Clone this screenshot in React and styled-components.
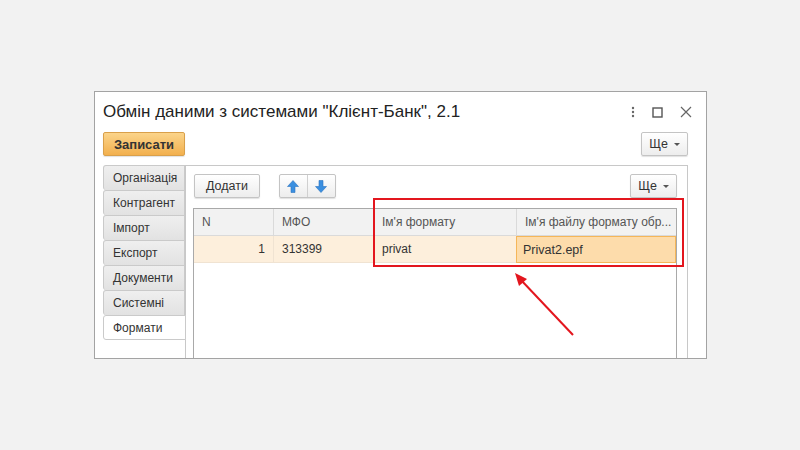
import React from 'react'
import styled, {createGlobalStyle} from 'styled-components'

const Global = createGlobalStyle`
  html, body {
    margin: 0;
    padding: 0;
    background: #f2f2f2;
    font-family: Arial, "Liberation Sans", sans-serif;
  }
`

const Page = styled.div`
  width: 800px;
  height: 450px;
  overflow: hidden;
  padding-top: 91px;
  padding-left: 94px;
  box-sizing: border-box;
`

const Window = styled.div`
  position: relative;
  width: 613px;
  height: 268px;
  background: #fff;
  border: 1px solid #a3a3a3;
  box-sizing: border-box;
  overflow: hidden;
  padding: 0 18px 0 8px;
  display: flex;
  flex-direction: column;
`

const TitleBar = styled.div`
  display: flex;
  align-items: center;
  height: 38px;
  padding-top: 2px;
  box-sizing: border-box;
`

const Title = styled.div`
  flex: 1;
  font-size: 17px;
  color: #222;
  white-space: nowrap;
`

const TitleIcons = styled.div`
  display: flex;
  align-items: center;
  gap: 17px;
  margin-right: -4px;
  color: #555;
`

const Toolbar = styled.div`
  display: flex;
  justify-content: space-between;
  align-items: center;
  margin-top: 2px;
  height: 24px;
`

const Button = styled.button`
  font-family: Arial, "Liberation Sans", sans-serif;
  font-size: 12.5px;
  color: #333;
  height: 24px;
  padding: 0 ${p => p.$px || 10}px;
  border: 1px solid #c4c4c4;
  border-radius: 2px;
  background: linear-gradient(#ffffff, #ededed);
  box-shadow: 0 1px 1px rgba(0,0,0,0.12);
  display: inline-flex;
  align-items: center;
  gap: 6px;
  cursor: pointer;
  box-sizing: border-box;
`

const SaveButton = styled(Button)`
  width: 82px;
  justify-content: center;
  font-weight: bold;
  font-size: 13px;
  border-color: #d9a04a;
  background: linear-gradient(#fbd48a, #f2b04e);
  color: #333;
`

const Caret = styled.span`
  width: 0;
  height: 0;
  border-left: 3px solid transparent;
  border-right: 3px solid transparent;
  border-top: 3px solid #555;
`

const TabPanel = styled.div`
  margin-top: 9px;
  display: flex;
  flex: 1;
`

const TabColumn = styled.div`
  width: 82px;
  display: flex;
  flex-direction: column;
  border-right: 1px solid #c8c8c8;
  margin-right: -1px;
`

const Tab = styled.div`
  height: 25px;
  box-sizing: border-box;
  padding-left: 9px;
  display: flex;
  align-items: center;
  font-size: 12px;
  color: #333;
  border: 1px solid #cacaca;
  border-bottom: none;
  border-radius: 3px 0 0 3px;
  background: ${p => p.$active ? '#fff' : 'linear-gradient(#efefef, #e2e2e2)'};
  margin-right: ${p => p.$active ? '-1px' : '0'};
  position: relative;
  &:last-child {
    border-bottom: 1px solid #cacaca;
  }
`

const Content = styled.div`
  flex: 1;
  border-top: 1px solid #c8c8c8;
  border-right: 1px solid #c8c8c8;
  padding: 8px 10px 0 9px;
  display: flex;
  flex-direction: column;
`

const ContentBar = styled.div`
  display: flex;
  align-items: center;
  height: 24px;
`

const Group = styled.div`
  display: flex;
  margin-left: 19px;
  border: 1px solid #c4c4c4;
  border-radius: 2px;
  background: linear-gradient(#ffffff, #ededed);
  box-shadow: 0 1px 1px rgba(0,0,0,0.12);
  height: 24px;
  box-sizing: border-box;
`

const GroupCell = styled.div`
  width: 27px;
  display: flex;
  align-items: center;
  justify-content: center;
  & + & {
    border-left: 1px solid #d0d0d0;
  }
`

const Spacer = styled.div`
  flex: 1;
`

const Table = styled.div`
  margin-top: 10px;
  margin-left: -1px;
  flex: 1;
  border: 1px solid #a9a9a9;
  border-bottom: none;
  display: flex;
  flex-direction: column;
`

const Row = styled.div`
  display: grid;
  grid-template-columns: 79px 100px 143px 1fr;
  height: 26px;
  background: ${p => p.$head ? '#f2f2f2' : '#fdefdc'};
  border-bottom: 1px solid ${p => p.$head ? '#dadada' : '#f0e3d2'};
`

const Cell = styled.div`
  display: flex;
  align-items: center;
  justify-content: ${p => p.$right ? 'flex-end' : 'flex-start'};
  padding: 0 8px;
  font-size: 12px;
  color: ${p => p.$head ? '#555' : '#333'};
  white-space: nowrap;
  overflow: hidden;
  box-sizing: border-box;
  border-left: ${p => p.$first ? 'none' : `1px solid ${p.$head ? '#dadada' : '#f0e3d2'}`};
  ${p => p.$selected && `
    background: #fddcab;
    border: 1px solid #f5b659;
    margin: 0 0 -1px 0;
    padding-left: 6px;
    font-size: 12.5px;
  `}
`

const Highlight = styled.div`
  position: absolute;
  left: 278px;
  top: 106px;
  width: 311px;
  height: 69px;
  border: 2px solid #e3161e;
  box-sizing: border-box;
`

const Arrow = styled.svg`
  position: absolute;
  left: 410px;
  top: 177px;
`

function UpArrow({down}) {
  return (
    <svg width="12" height="13" viewBox="0 0 12 13" style={down ? {transform: 'rotate(180deg)'} : undefined}>
      <path d="M6 0.5 L11.5 6.5 L8 6.5 L8 12.5 L4 12.5 L4 6.5 L0.5 6.5 Z" fill="#3a8fe0" stroke="#2e74c0" strokeWidth="0.6" />
    </svg>
  )
}

export default function App() {
  const tabs = ['Організація', 'Контрагент', 'Імпорт', 'Експорт', 'Документи', 'Системні', 'Формати']
  return (
    <Page>
      <Global />
      <Window>
        <TitleBar>
          <Title>Обмін даними з системами "Клієнт-Банк", 2.1</Title>
          <TitleIcons>
            <svg width="4" height="12" viewBox="0 0 4 12">
              <circle cx="2" cy="2" r="1.2" fill="#666" />
              <circle cx="2" cy="6" r="1.2" fill="#666" />
              <circle cx="2" cy="10" r="1.2" fill="#666" />
            </svg>
            <svg width="11" height="11" viewBox="0 0 11 11">
              <rect x="1" y="1" width="9" height="9" fill="none" stroke="#555" strokeWidth="1.4" />
            </svg>
            <svg width="12" height="12" viewBox="0 0 12 12">
              <path d="M1 1 L11 11 M11 1 L1 11" stroke="#666" strokeWidth="1.2" />
            </svg>
          </TitleIcons>
        </TitleBar>
        <Toolbar>
          <SaveButton>Записати</SaveButton>
          <Button $px={7}>Ще <Caret /></Button>
        </Toolbar>
        <TabPanel>
          <TabColumn>
            {tabs.map(t => <Tab key={t} $active={t === 'Формати'}>{t}</Tab>)}
          </TabColumn>
          <Content>
            <ContentBar>
              <Button $px={11}>Додати</Button>
              <Group>
                <GroupCell><UpArrow /></GroupCell>
                <GroupCell><UpArrow down /></GroupCell>
              </Group>
              <Spacer />
              <Button $px={7}>Ще <Caret /></Button>
            </ContentBar>
            <Table>
              <Row $head>
                <Cell $head $first>N</Cell>
                <Cell $head>МФО</Cell>
                <Cell $head>Ім'я формату</Cell>
                <Cell $head>Ім'я файлу формату обр...</Cell>
              </Row>
              <Row>
                <Cell $first $right>1</Cell>
                <Cell>313399</Cell>
                <Cell>privat</Cell>
                <Cell $selected>Privat2.epf</Cell>
              </Row>
            </Table>
          </Content>
        </TabPanel>
        <Highlight />
        <Arrow width="70" height="70" viewBox="0 0 70 70">
          <line x1="68" y1="66" x2="16" y2="11" stroke="#e3161e" strokeWidth="2" />
          <path d="M10 4 L22 10 L14 17 Z" fill="#e3161e" />
        </Arrow>
      </Window>
    </Page>
  )
}
